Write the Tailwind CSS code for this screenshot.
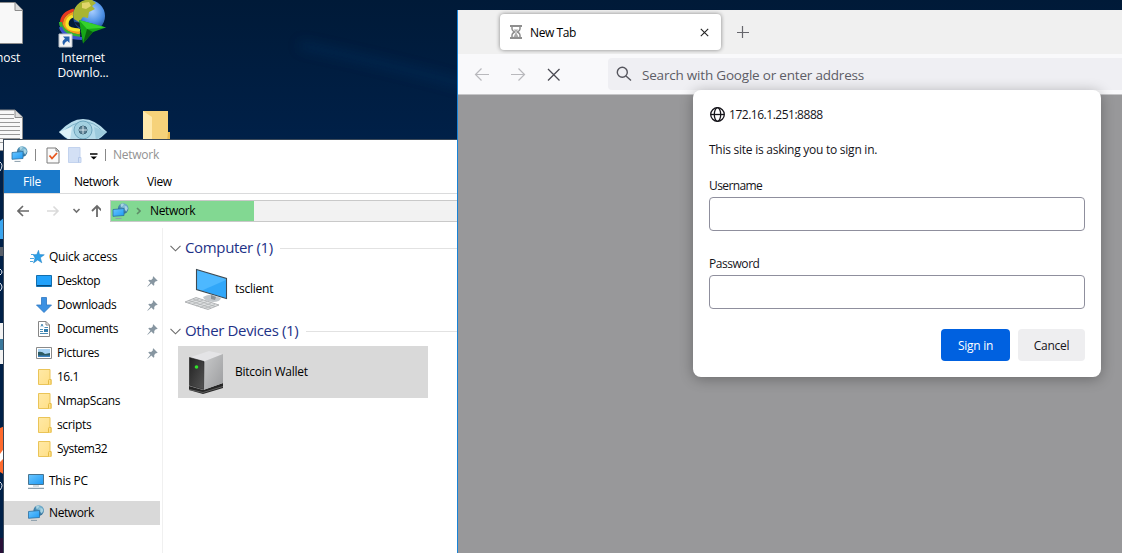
<!DOCTYPE html>
<html lang="en">
<head>
<meta charset="utf-8">
<title>Desktop</title>
<script src="https://cdn.jsdelivr.net/npm/@tailwindcss/browser@4"></script>
</head>
<body class="relative h-[553px] w-[1122px] overflow-hidden bg-[#001d3f] bg-linear-to-b from-[#001a38] to-[#002048] to-[140px] font-['Open_Sans','Noto_Sans',sans-serif] text-[12px] leading-4 tracking-[-0.25px] text-black">

<svg class="absolute size-0">
  <defs>
    <linearGradient id="scr" x1="0" y1="0" x2="1" y2="1"><stop offset="0" stop-color="#6cc6ff"/><stop offset="1" stop-color="#1c9af5"/></linearGradient>
    <radialGradient id="globe" cx=".6" cy=".3" r=".8"><stop offset="0" stop-color="#8fc7dd"/><stop offset=".5" stop-color="#4d8fb5"/><stop offset="1" stop-color="#235a85"/></radialGradient>
    <radialGradient id="earth" cx=".6" cy=".35" r=".7"><stop offset="0" stop-color="#a8ceff"/><stop offset=".5" stop-color="#4b8fe4"/><stop offset="1" stop-color="#123a7c"/></radialGradient>
    <linearGradient id="fold" x1="0" y1="0" x2="1" y2="1"><stop offset="0" stop-color="#ffe9a6"/><stop offset="1" stop-color="#ffdf86"/></linearGradient>
    <linearGradient id="metal" x1="0" y1="0" x2="1" y2="1"><stop offset="0" stop-color="#c9cacb"/><stop offset="1" stop-color="#9b9c9e"/></linearGradient>
    <linearGradient id="dark" x1="0" y1="0" x2="1" y2="1"><stop offset="0" stop-color="#222"/><stop offset="1" stop-color="#555"/></linearGradient>
    <symbol id="net" viewBox="0 0 16 16">
      <circle cx="10.7" cy="5.500" r="5.200" fill="url(#globe)"/>
      <path d="M8 1.500Q10 0 11.500 1L10 3.500 8.500 4zM12.500 3l2 .5.8 2-1.500 3-1.500-2z" fill="#a9d3e2"/>
      <path d="M.5 6.500 11.500 5.500v7L.5 13.300z" fill="url(#scr)" stroke="#2b6f9f" stroke-width=".8"/>
      <path d="M3 15.400h6" stroke="#8a9dab" stroke-width="1"/>
    </symbol>
    <symbol id="folder" viewBox="0 0 14 16">
      <path d="M.5.500h11.500v10h1v5H.5z" fill="url(#fold)" stroke="#eac458" stroke-width="1"/>
      <path d="M10.500 15.500V11.500q0-1 1-1h1.500v5" fill="#ffe08a" stroke="#e5bc45" stroke-width="1"/>
    </symbol>
    <symbol id="pin" viewBox="0 0 11 11">
      <path d="M6.300.3 10.700 4.700 9.600 5.200 9 4.900 7.200 6.900 7.300 8.900 6.500 9.700 4.400 7.600.7 10.800.3 10.400 3.400 6.700 1.300 4.600 2.100 3.700 4.200 3.900 6.100 2.100 5.700 1.300z" fill="#8796a1"/>
    </symbol>
  </defs>
</svg>

<!-- wallpaper light streak -->
<svg class="absolute left-0 top-0" width="460" height="140" viewBox="0 0 460 140">
  <defs><filter id="soft" x="-20%" y="-50%" width="140%" height="200%"><feGaussianBlur stdDeviation="6"/></filter></defs>
  <path d="M300 45Q380 62 470 86" fill="none" stroke="#003260" stroke-width="7" opacity=".5" filter="url(#soft)"/>
</svg>

<!-- desktop icons -->
<svg class="absolute left-0 top-0" width="26" height="46" viewBox="0 0 26 46">
  <path d="M-2 2.500H15L22.500 10V43.500H-2z" fill="#f8f8f8" stroke="#8c8c8c"/><path d="M15 2.500V10.500h7.500" fill="#dcdcdc" stroke="#8c8c8c"/>
</svg>
<div class="absolute left-[-4px] top-[50px] text-white tracking-[-0.1px]">host</div>
<svg class="absolute left-[58px] top-0" width="50" height="48" viewBox="0 0 50 48">
  <g fill="none" stroke-width="3.200">
    <path d="M16 10Q4 13 3.500 23T22 36" stroke="#e8371f"/>
    <path d="M16 13Q7 16 6.500 23T22 33" stroke="#f49b1b"/>
    <path d="M15 16Q9 18 9 24T22 30" stroke="#f5e52a"/>
    <path d="M2.500 22Q3 33 22 36" stroke="#35b530"/>
    <path d="M2.500 27Q6 38 24 38.500" stroke="#3c55cc"/>
  </g>
  <circle cx="31" cy="16" r="16" fill="url(#earth)"/>
  <path d="M17 8Q23-2 34 0L38 3 34 6 37 9 31 12 30 18 25 17 21 22 16 19Q14 14 17 8z" fill="#a9b532"/>
  <path d="M24 3l7-1 2 4-5 3-4-1z" fill="#e1d56a"/>
  <path d="M16 22Q23 31 33 31L36 24z" fill="#0d1c30"/>
  <path d="M21 20 48 27.500 35 32 25 43.500z" fill="#16a818"/><path d="M21 20 48 27.500 29 29z" fill="#35d12c"/><path d="M25 43.500 29 29 35 32z" fill="#0a6410"/>
  <path d="M1 34h13v13H1z" fill="#f4f4f4" stroke="#b8c0c8"/><path d="M5 36.500h6.500V43L9.500 41Q6.500 42 6 45.500 2.500 41.500 7 38.700z" fill="#2561ad"/>
</svg>
<div class="absolute left-[48px] top-[50px] w-[70px] text-center leading-[15px] text-white tracking-[-0.15px]">Internet<br>Downlo...</div>
<svg class="absolute left-0 top-[109px]" width="26" height="45" viewBox="0 0 26 45">
  <path d="M-2 1H15L22.500 8V41.500H-2z" fill="#f8f8f8" stroke="#8c8c8c"/><path d="M15 1V8.500h7.500" fill="#dcdcdc" stroke="#8c8c8c"/>
  <path d="M0 5.500h14M0 9.500h14M0 13.500h20M0 17.500h20M0 21.500h20M0 25.500h20M0 29.500h20M0 33.500h20" stroke="#999"/>
</svg>
<svg class="absolute left-[58px] top-[117px]" width="50" height="30" viewBox="0 0 50 30">
  <path d="M1 15Q13 2 25 2T49 15Q38 27 25 27T1 15z" fill="#b7dceb"/><path d="M5 15Q14 6 25 5T45 15" fill="none" stroke="#7fb4ca"/>
  <path d="M1 15 14 10 12 23z" fill="#dff2f8"/><path d="M49 15 36 10 38 23z" fill="#9ccadd"/>
  <circle cx="25" cy="13" r="9" fill="#a3d0e0" stroke="#6ea5bd"/><circle cx="25" cy="13" r="4" fill="#5c7f92" stroke="#3f6478"/><path d="M25 9v8M21 13h8" stroke="#d5e6ee"/>
</svg>
<svg class="absolute left-[142px] top-[110px]" width="29" height="32" viewBox="0 0 29 32"><path d="M1 1h25v21h2v10H1z" fill="#f6d27a"/><path d="M1 1 10 7V32H1z" fill="#ffe9ac"/><path d="M26 22h2v10h-3z" fill="#e8b84f"/></svg>
<svg class="absolute left-0 top-[150px]" width="5" height="403" viewBox="0 0 5 403">
  <path d="M0 12Q4 15 0 21M0 119q4 3 0 6M0 133q4 4 0 8M0 332q4 3 0 8" fill="none" stroke="#e8edf5"/>
  <path d="M0 71 5 67V89H0z" fill="#3aa5ef"/><path d="M0 97h5v9H0z" fill="#59606a"/>
  <path d="M0 173h5v41H0z" fill="#f3f3f3"/><path d="M0 189h5v11H0z" fill="#3a789c"/>
  <path d="M0 278 5 276V325L0 322z" fill="#ff6a2d"/><path d="M0 304 5 297v10L0 312z" fill="#fff"/><path d="M0 388h5v15H0z" fill="#281038"/>
</svg>

<!-- file explorer window -->
<section class="absolute left-[3px] top-[139px] flex h-[420px] w-[460px] flex-col border-l border-t border-[#3a4858] bg-white">
  <div class="flex h-[30px] items-center pl-[7px]">
    <svg class="mt-[-2px] h-4 w-[17px]"><use href="#net"/></svg>
    <div class="ml-[7px] h-3 w-px bg-[#888]"></div>
    <svg class="ml-[10px]" width="14" height="17" viewBox="0 0 14 17"><path d="M1 1H10L13 4V16H1z" fill="#fafafa" stroke="#7d7d7d"/><path d="M10 1v3h3" fill="none" stroke="#7d7d7d"/><path d="m3.500 8.500 2.500 3 5-5.500" fill="none" stroke="#e8561d" stroke-width="1.800"/></svg>
    <svg class="ml-2" width="14" height="16" viewBox="0 0 14 16"><path d="M.5.500h11.500v10h1v5H.5z" fill="#d3e0f5" stroke="#c3d3ee"/><path d="M10.500 15.500v-5h2" fill="none" stroke="#b3c7e8"/></svg>
    <svg class="ml-[8px] mt-[3px]" width="8" height="7" viewBox="0 0 8 7"><path d="M0 1h7.500" stroke="#000" stroke-width="1.500"/><path d="M.5 3.500h6.500L3.800 6.500z"/></svg>
    <div class="ml-[7px] h-3 w-px bg-[#888]"></div>
    <span class="ml-[7px] text-[#929292]">Network</span>
  </div>
  <div class="flex h-6 border-b border-[#dadbdc] leading-6">
    <div class="w-14 bg-[#1979ca] text-center text-white">File</div>
    <div class="ml-[14px] w-[46px] whitespace-nowrap tracking-[-0.45px]">Network</div>
    <div class="ml-[27px] tracking-[-0.4px]">View</div>
  </div>
  <div class="flex h-[34px] items-center">
    <svg class="ml-[13px]" width="84" height="14" viewBox="0 0 84 14" fill="none">
      <path d="M12 7H1M6 2 1 7l5 5" stroke="#6a6a6a" stroke-width="1.600"/>
      <path d="M30 7H41M36.500 2.500 41 7l-4.500 4.500" stroke="#dadada" stroke-width="1.600"/>
      <path d="m56.500 5 3 3 3-3" stroke="#707070" stroke-width="1.600"/>
      <path d="M80 13V2M75 7l5-5 5 5" stroke="#6a6a6a" stroke-width="1.800"/>
    </svg>
    <div class="ml-[9px] flex h-[22px] flex-1 items-center border border-[#c9c9c9] bg-[#f2f2f2]">
      <div class="flex h-5 w-[143px] items-center bg-[#82d892] pl-px">
        <svg class="h-4 w-[17px]"><use href="#net"/></svg>
        <svg class="ml-[7px]" width="5" height="8" viewBox="0 0 5 8"><path d="m1 1 3 3-3 3" fill="none" stroke="#5f8d68" stroke-width="1.600"/></svg>
        <span class="ml-[9px] mt-[-1px] tracking-[-0.35px]">Network</span>
      </div>
    </div>
  </div>
  <div class="flex flex-1">
    <nav class="w-[159px] border-r border-[#f0f0f0] pt-[17px]">
      <div class="flex h-6 items-center pl-6">
        <svg class="ml-[2px]" width="15" height="14" viewBox="0 0 15 14"><path d="M8.500.3 9.500 4.500 14.300 4.800 10.300 7.700 11.800 12.800 7.700 10 3.500 13 5 8 3.300 4.800 6.800 4.500z" fill="#2c9fe8" stroke="#1d7cc0" stroke-width=".5"/><path d="M1 4.500h3M0 8.500h4M0 11.500h3" stroke="#4ca7df"/></svg>
        <span class="ml-1">Quick access</span>
      </div>
      <div class="flex h-6 items-center pl-8">
        <svg width="16" height="12" viewBox="0 0 16 12"><path d="M.5.500h15v11H.5z" fill="#22a2fb" stroke="#136fae"/><path d="M1 10.500h14" stroke="#064b80"/></svg>
        <span class="ml-[5px] flex-1 tracking-[-0.45px]">Desktop</span><svg class="mr-1 size-[11px]"><use href="#pin"/></svg>
      </div>
      <div class="flex h-6 items-center pl-8">
        <svg width="16" height="16" viewBox="0 0 16 16"><path d="M5.500.500h5V8h5L8 15.500.5 8h5z" fill="#3c91e2" stroke="#2c76c2" stroke-width=".8"/></svg>
        <span class="ml-[5px] flex-1 tracking-[-0.35px]">Downloads</span><svg class="mr-1 size-[11px]"><use href="#pin"/></svg>
      </div>
      <div class="flex h-6 items-center pl-8">
        <svg width="16" height="16" viewBox="0 0 16 16"><path d="M2.500.500H10L13.500 4V15.500h-11z" fill="#fff" stroke="#868686"/><path d="M10 .5V4h3.500" fill="none" stroke="#868686"/><path d="M4 12.500h8M4 10.500h3M4 8.500h3M8.500 6.500H12M5 5.500 6 3l1 2.500" fill="none" stroke="#4a8cb5"/><path d="M8 8h4v3H8z" fill="#2f7cad"/></svg>
        <span class="ml-[5px] flex-1 tracking-[-0.35px]">Documents</span><svg class="mr-1 size-[11px]"><use href="#pin"/></svg>
      </div>
      <div class="flex h-6 items-center pl-8">
        <svg width="16" height="12" viewBox="0 0 16 12"><path d="M.5.500h15v11H.5z" fill="#fff" stroke="#8a8a8a"/><path d="M2 2h12v8H2z" fill="#a9d4f5"/><path d="M2 5Q6 4 9 7l5-1v4H2z" fill="#2d5b63"/><path d="M2 8.500h12V10H2z" fill="#3c83c2"/></svg>
        <span class="ml-[5px] flex-1 tracking-[-0.35px]">Pictures</span><svg class="mr-1 size-[11px]"><use href="#pin"/></svg>
      </div>
      <div class="flex h-6 items-center pl-[34px]"><svg class="h-4 w-[14px]"><use href="#folder"/></svg><span class="ml-[5px] tracking-[-0.5px]">16.1</span></div>
      <div class="flex h-6 items-center pl-[34px]"><svg class="h-4 w-[14px]"><use href="#folder"/></svg><span class="ml-[5px] tracking-[-0.35px]">NmapScans</span></div>
      <div class="flex h-6 items-center pl-[34px]"><svg class="h-4 w-[14px]"><use href="#folder"/></svg><span class="ml-[5px] tracking-[-0.35px]">scripts</span></div>
      <div class="flex h-6 items-center pl-[34px]"><svg class="h-4 w-[14px]"><use href="#folder"/></svg><span class="ml-[5px] tracking-[-0.5px]">System32</span></div>
      <div class="mt-2 flex h-6 items-center pl-6">
        <svg width="16" height="15" viewBox="0 0 16 15"><path d="M.5.500h15v10H.5z" fill="url(#scr)" stroke="#49748f"/><path d="M5 12h6" stroke="#a9bac6"/><path d="M0 14.300h16" stroke="#71899a"/></svg>
        <span class="ml-[5px]">This PC</span>
      </div>
      <div class="mt-2 mr-[2px] flex h-6 items-center bg-[#d9d9d9] pl-6"><svg class="size-4"><use href="#net"/></svg><span class="ml-[5px] tracking-[-0.4px]">Network</span></div>
    </nav>
    <main class="flex-1 pl-[7px] pt-[10px]">
      <div class="flex h-5 items-center text-[15px] text-[#1e3287]">
        <svg width="11" height="7" viewBox="0 0 11 7"><path d="m.5.800 5 5 5-5" fill="none" stroke="#6b6b6b" stroke-width="1.100"/></svg>
        <span class="ml-1 mt-[-2px] w-[95px] whitespace-nowrap tracking-[-0.35px]">Computer (1)</span><div class="h-px flex-1 bg-[#e2e2e2]"></div>
      </div>
      <div class="ml-[8px] mt-[5px] flex h-[52px] items-center">
        <svg class="ml-[6px]" width="44" height="42" viewBox="0 0 44 42">
          <path d="M19 29q6-3 9-2l9 3q-1 4-8 4-9-1-10-5z" fill="#c2c7cb"/><path d="m27 27 5 2-1 3-4-1z" fill="#8d9499"/>
          <path d="M12.500 1.500 42.500 10.500V30.500L12.500 21.500z" fill="#4db8ff" stroke="#3f4a52" stroke-width="1.100"/>
          <path d="M18 22.500 42 12v18z" fill="#1596f3" opacity=".5"/>
          <path d="M1 34 12 29.500 35 37 24 41.500z" fill="#dfe1e2" stroke="#a3a6a8" stroke-width=".8"/>
          <path d="m4 35 11-4M8 36.500 19 32M12 38l11-4.500M16 39.500 27 35M20 40.500 31 36.500M5 32.500l22 7.500M9 31l22 7.500" stroke="#a4a7a9" stroke-width=".6"/>
        </svg>
        <span class="ml-[7px] tracking-[-0.25px]">tsclient</span>
      </div>
      <div class="mt-[6px] flex h-5 items-center text-[15px] text-[#1e3287]">
        <svg width="11" height="7" viewBox="0 0 11 7"><path d="m.5.800 5 5 5-5" fill="none" stroke="#6b6b6b" stroke-width="1.100"/></svg>
        <span class="ml-1 mt-[-2px] w-[121px] whitespace-nowrap tracking-[-0.35px]">Other Devices (1)</span><div class="h-px flex-1 bg-[#e2e2e2]"></div>
      </div>
      <div class="ml-[8px] mt-[5px] flex h-[52px] w-[250px] items-center bg-[#d9d9d9]">
        <svg class="ml-[10px]" width="37" height="44" viewBox="0 0 37 44">
          <path d="m1 36 14 4 20-7v5L15 44 1 40z" fill="#262626"/><path d="m1 39.500 14 3 20-6" fill="none" stroke="#777" stroke-width=".7"/>
          <path d="M1.500 7.500 21 1 35 4 16 11.500z" fill="#e4e4e6"/><path d="M16 11.500 35 4v29L15.500 40z" fill="url(#metal)"/><path d="M1.500 7.500 16 11.500l-.5 28L1.500 35.500z" fill="url(#dark)" stroke="#1a1a1a" stroke-width=".6"/><circle cx="8.500" cy="17" r="1.800" fill="#31e52b"/>
        </svg>
        <span class="ml-[10px]">Bitcoin Wallet</span>
      </div>
    </main>
  </div>
</section>

<!-- browser window -->
<section class="absolute left-[457px] top-[10px] flex h-[543px] w-[665px] flex-col border-l border-[#1883d7] bg-[#98989a]">
  <div class="flex h-11 items-center bg-[#f0f0f0]">
    <div class="ml-[42px] flex h-9 w-[221px] items-center rounded bg-white shadow-[0_0_4px_rgba(0,0,0,0.45)]">
      <svg class="ml-[10px]" width="12" height="14" viewBox="0 0 12 14"><path d="M0 1h12M0 13h12" stroke="#8e8e8e" stroke-width="2"/><path d="M2 2v2q0 1.500 2.500 3Q2 8.500 2 10v2M10 2v2q0 1.500-2.500 3Q10 8.500 10 10v2" fill="none" stroke="#8e8e8e" stroke-width="1.500"/><path d="M3.500 4.500h5L6 7l2.500 5h-5L6 7z" fill="#aaa"/></svg>
      <span class="ml-2 flex-1 pt-px tracking-[-0.4px]">New Tab</span>
      <svg class="mr-3" width="9" height="9" viewBox="0 0 9 9"><path d="m.8.800 7.400 7.400m0-7.400L.8 8.200" stroke="#222" stroke-width="1.100"/></svg>
    </div>
    <svg class="ml-4" width="12" height="12" viewBox="0 0 12 12"><path d="M5.500 0v12M0 6.500h12" stroke="#66666c" stroke-width="1.200"/></svg>
  </div>
  <div class="flex h-[41px] items-center border-b border-[#c6c6c8] bg-[#f9f9fb]">
    <svg class="ml-[16px]" width="88" height="14" viewBox="0 0 88 14" fill="none" stroke-width="1.200">
      <path d="M15 7.500H1.500m6-6-6 6 6 6M37 7.500h13.500m-6-6 6 6-6 6" stroke="#b9b9bd"/><path d="m74 2 11.500 11.500m0-11.500L74 13.500" stroke="#4a4a52" stroke-width="1.300"/>
    </svg>
    <div class="ml-[46px] flex h-8 flex-1 items-center rounded-l bg-[#efeff3] text-[#5d5d66]">
      <svg class="ml-[8px]" width="16" height="16" viewBox="0 0 16 16" fill="none" stroke="#55555d" stroke-width="1.400"><circle cx="6.300" cy="6.300" r="5"/><path d="m10 10 5 4.500"/></svg>
      <span class="ml-[10px] pt-px text-[13.500px] tracking-[-0.2px]">Search with Google or enter address</span>
    </div>
  </div>
</section>

<!-- sign-in prompt -->
<form class="absolute left-[693px] top-[90px] flex h-[287px] w-[408px] flex-col rounded-lg bg-white px-4 pt-4 text-[#15141a] shadow-[0_2px_14px_rgba(0,0,0,0.3)]">
  <div class="flex h-[17px] items-center">
    <svg class="ml-px" width="15" height="15" viewBox="0 0 15 15" fill="none" stroke="#15141a" stroke-width="1.300"><circle cx="7.500" cy="7.500" r="6.800"/><ellipse cx="7.500" cy="7.500" rx="3.200" ry="6.800"/><path d="M.7 7.500h13.600"/></svg>
    <span class="ml-1 tracking-[-0.48px]">172.16.1.251:8888</span>
  </div>
  <p class="mt-[19px]">This site is asking you to sign in.</p>
  <label class="mt-5 tracking-[-0.6px]">Username</label>
  <input class="mt-[3px] h-[34px] rounded border border-[#8f8f9d] bg-white">
  <label class="mt-[25px] tracking-[-0.45px]">Password</label>
  <input class="mt-[3px] h-[34px] rounded border border-[#8f8f9d] bg-white">
  <div class="mt-5 flex justify-end gap-2">
    <button type="button" class="h-8 w-[69px] rounded bg-[#0061e0] pt-0.5 text-white">Sign in</button>
    <button type="button" class="h-8 w-[67px] rounded bg-[#eeeef0] pt-0.5">Cancel</button>
  </div>
</form>
</body>
</html>
